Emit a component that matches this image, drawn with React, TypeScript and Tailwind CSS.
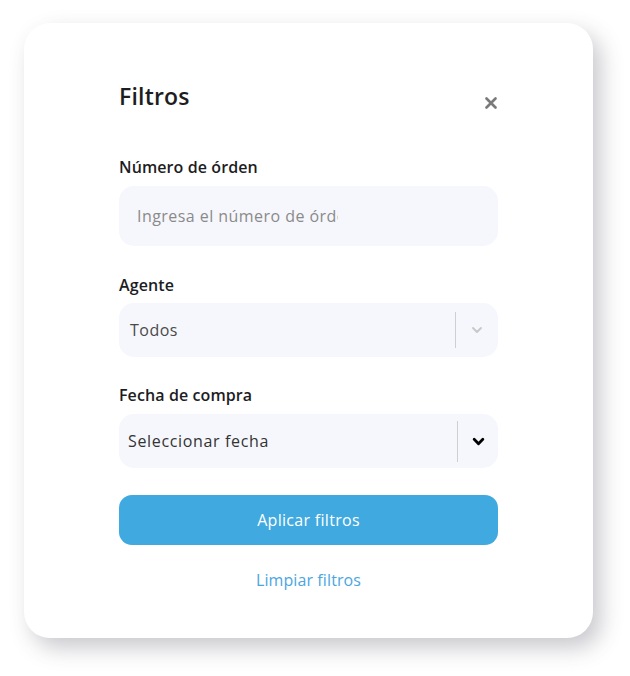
import React from 'react';

const font = { fontFamily: '"Open Sans", "Liberation Sans", sans-serif' };

const Chevron = ({ className }: { className: string }) => (
  <svg viewBox="0 0 12 8" className={className} fill="none" stroke="currentColor" strokeLinecap="round" strokeLinejoin="round">
    <path d="M2 2l4 4 4-4" />
  </svg>
);

const App = () => {
  return (
    <div className="w-[630px] h-[676px] bg-white pt-[23px] pl-[24px]" style={font}>
      <div className="w-[569px] h-[615px] bg-white rounded-[26px] shadow-[8px_10px_22px_rgba(60,60,80,0.28)] px-[95px] pt-[58px]">
        {/* Header */}
        <div className="flex items-start justify-between">
          <h2 className="text-[23px] font-semibold text-[#1d1d1f] leading-[30px] tracking-[0.2px]">Filtros</h2>
          <button className="mt-[16px] mr-[1px] text-[#7a7a7a]">
            <svg viewBox="0 0 12 12" className="w-[12px] h-[12px]" stroke="currentColor" strokeWidth="2.6" strokeLinecap="round">
              <path d="M1.5 1.5l9 9M10.5 1.5l-9 9" />
            </svg>
          </button>
        </div>

        {/* Número de órden */}
        <label className="block mt-[46px] text-[16px] font-semibold text-[#1d1d1f] leading-[20px] tracking-[0.1px]">Número de órden</label>
        <div className="mt-[9px] h-[60px] rounded-[15px] bg-[#f6f7fc] flex items-center pl-[18px]">
          <input
            placeholder="Ingresa el número de órden"
            className="w-[201px] bg-transparent outline-none text-[16px] tracking-[0.45px] text-[#333] placeholder:text-[#8a8a8a]"
            style={font}
          />
        </div>

        {/* Agente */}
        <label className="block mt-[29px] text-[16px] font-semibold text-[#1d1d1f] leading-[20px] tracking-[0.1px]">Agente</label>
        <div className="mt-[8px] h-[54px] rounded-[15px] bg-[#f6f7fc] flex items-center pl-[11px] pr-[15px]">
          <span className="flex-1 text-[16px] tracking-[0.5px] text-[#4a4a4a]">Todos</span>
          <div className="w-px h-[36px] bg-[#cfcfcf]" />
          <Chevron className="ml-[15px] w-[12px] h-[8px] text-[#c8c8c8] stroke-[1.9]" />
        </div>

        {/* Fecha de compra */}
        <label className="block mt-[28px] text-[16px] font-semibold text-[#1d1d1f] leading-[20px] tracking-[0.1px]">Fecha de compra</label>
        <div className="mt-[9px] h-[54px] rounded-[15px] bg-[#f6f7fc] flex items-center pl-[9px] pr-[13px]">
          <span className="flex-1 text-[16px] tracking-[0.65px] text-[#333]">Seleccionar fecha</span>
          <div className="w-px h-[41px] bg-[#cfcfcf]" />
          <Chevron className="ml-[14px] w-[13px] h-[9px] text-black stroke-[2.6]" />
        </div>

        {/* Actions */}
        <button className="mt-[27px] w-full h-[50px] rounded-[13px] bg-[#3fa9e0] text-white text-[16px] font-medium tracking-[0.3px]">
          Aplicar filtros
        </button>
        <div className="mt-[23px] text-center">
          <button className="text-[16px] text-[#4ba6e0] tracking-[0.1px]">Limpiar filtros</button>
        </div>
      </div>
    </div>
  );
};

export default App;
